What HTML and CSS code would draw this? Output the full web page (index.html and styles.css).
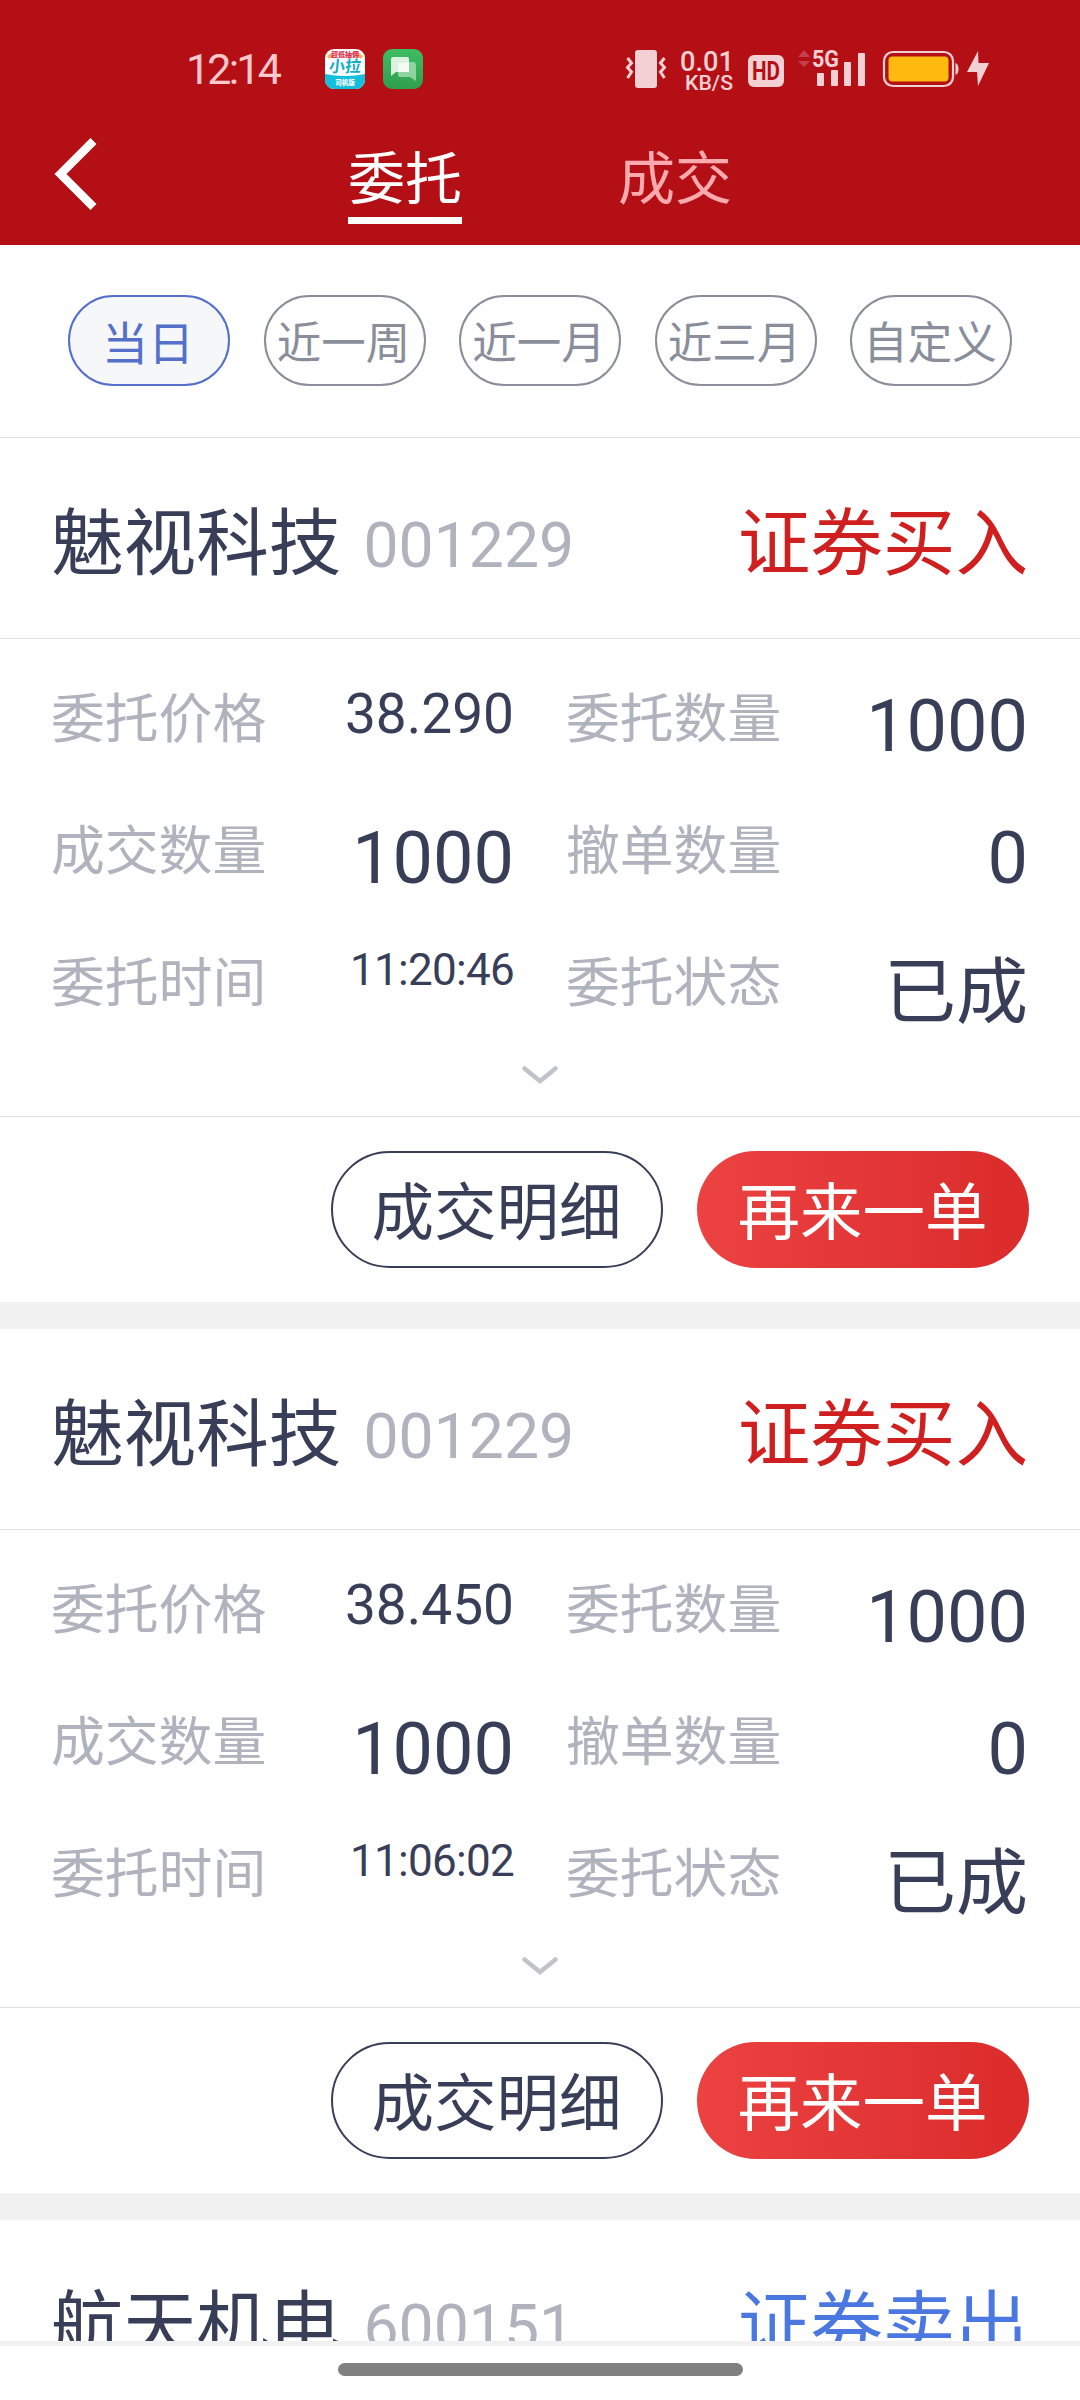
FILE: index.html
```html
<!DOCTYPE html>
<html lang="zh-CN">
<head>
  <meta charset="UTF-8" />
  <meta name="viewport" content="width=device-width, initial-scale=1.0"/>
  <title>当日委托</title>
  <link rel="stylesheet" href="styles.css">
</head>
<body>
  <div class="screen">
    <!-- Header -->
    <header class="header">
      <div class="status-bar">
        <span class="clock">12:14</span>
        <svg class="app-icon" viewBox="0 0 40 40">
          <defs><clipPath id="appClip"><rect width="40" height="40" rx="9"/></clipPath></defs>
          <g clip-path="url(#appClip)">
            <rect width="40" height="40" fill="#fff"/>
            <path d="M0 25q20 4 40 0v15H0z" fill="#12bfdc"/>
            <path d="M2 7l4-3 2 3-4 3zM38 7l-4-3-2 3 4 3z" fill="#f2b75c"/>
            <text x="20" y="8" font-size="7" font-weight="900" fill="#e0304a" text-anchor="middle">超低抽佣</text>
            <text x="20" y="23" font-size="16" font-weight="700" fill="#12adc9" text-anchor="middle" transform="skewX(-6) translate(2 0)">小拉</text>
            <text x="20" y="36" font-size="6.5" font-weight="900" fill="#fff" text-anchor="middle">司机版</text>
          </g>
        </svg>
        <svg class="app-icon chat-icon" viewBox="0 0 40 40">
          <defs>
            <linearGradient id="chatBg" x1="0" y1="0" x2="0" y2="1">
              <stop offset="0" stop-color="#3dbd62"/><stop offset="1" stop-color="#2f9f4e"/>
            </linearGradient>
          </defs>
          <rect width="40" height="40" rx="9" fill="url(#chatBg)"/>
          <path d="M17 13h13a3 3 0 0 1 3 3v16l-6-4H17a2 2 0 0 1-2-2V15a2 2 0 0 1 2-2z" fill="#8fd49f"/>
          <path d="M10 8h14a2 2 0 0 1 2 2v11a2 2 0 0 1-2 2H13l-5 4V10a2 2 0 0 1 2-2z" fill="#dcf2e0"/>
          <rect x="15" y="14" width="11" height="9" fill="#f4fbf5"/>
        </svg>

        <svg class="vibrate" viewBox="0 0 40 38">
          <rect x="9" y="0" width="22" height="38" rx="3" fill="#f3d0d3"/>
          <path d="M1.5 8l4 5-4 4.500 4 4.500-4 6M38.500 8l-4 5 4 4.500-4 4.500 4 6" fill="none" stroke="#f3d0d3" stroke-width="3"/>
        </svg>
        <svg class="net-speed" viewBox="0 0 54 42">
          <g fill="#f3d0d3" font-weight="500">
            <text x="0" y="22" font-size="28.500" textLength="54" lengthAdjust="spacingAndGlyphs">0.01</text>
            <text x="5" y="40.500" font-size="20.500" textLength="48" lengthAdjust="spacingAndGlyphs">KB/S</text>
          </g>
        </svg>
        <svg class="hd" viewBox="0 0 36 32">
          <rect width="36" height="32" rx="6" fill="#f3d0d3"/>
          <text x="4" y="25" font-size="25" font-weight="700" fill="#b50f16" textLength="28" lengthAdjust="spacingAndGlyphs">HD</text>
        </svg>
        <svg class="signal" viewBox="0 0 68 38">
          <path d="M0 8l6-7 6 7zM0 12h12l-6 6z" fill="#c5404a"/>
          <text x="14" y="18" font-size="24" font-weight="700" fill="#f3d0d3" textLength="27" lengthAdjust="spacingAndGlyphs">5G</text>
          <g fill="#f3d0d3">
            <rect x="19" y="24" width="7" height="13" rx="1"/>
            <rect x="33" y="21" width="7" height="16" rx="1"/>
            <rect x="46" y="13" width="7" height="24" rx="1"/>
            <rect x="60" y="4" width="7" height="33" rx="1"/>
          </g>
        </svg>
        <svg class="battery" viewBox="0 0 76 36">
          <rect x="1" y="1" width="69" height="34" rx="9" fill="none" stroke="#f3d0d3" stroke-width="2.200"/>
          <rect x="5.500" y="5.500" width="60" height="25" rx="4" fill="#ffb90f"/>
          <path d="M72.500 12q3 1 3 6t-3 6z" fill="#f3d0d3"/>
        </svg>
        <svg class="bolt" viewBox="0 0 22 36">
          <path d="M11 0L0 21h10l1 14L22 12H11.500z" fill="#f3d0d3"/>
        </svg>
      </div>

      <nav class="tabs">
        <svg class="back" viewBox="0 0 42 72">
          <path d="M38.500 3L5.500 36l33 33" fill="none" stroke="#fff" stroke-width="8.500"/>
        </svg>
        <a class="tab active">委托</a>
        <a class="tab">成交</a>
      </nav>
    </header>

    <!-- Date filter -->
    <div class="filters">
      <button class="chip active">当日</button>
      <button class="chip">近一周</button>
      <button class="chip">近一月</button>
      <button class="chip">近三月</button>
      <button class="chip">自定义</button>
    </div>

    <!-- Orders -->
    <main class="orders">
      <section class="order">
        <div class="order-head">
          <span class="name">魅视科技</span>
          <span class="code">001229</span>
          <span class="side buy">证券买入</span>
        </div>
        <div class="order-body">
          <div class="fields">
            <span class="label">委托价格</span><span class="value price">38.290</span>
            <span class="label">委托数量</span><span class="value">1000</span>
            <span class="label">成交数量</span><span class="value">1000</span>
            <span class="label">撤单数量</span><span class="value">0</span>
            <span class="label">委托时间</span><span class="value time">11:20:46</span>
            <span class="label">委托状态</span><span class="value status">已成</span>
          </div>
          <svg class="expand" viewBox="0 0 36 18"><path d="M2.500 2.500L18 15 33.500 2.500" fill="none" stroke="#c1c3ca" stroke-width="4.500" stroke-linecap="round"/></svg>
        </div>
        <div class="order-actions">
          <button class="btn">成交明细</button>
          <button class="btn primary">再来一单</button>
        </div>
      </section>

      <section class="order">
        <div class="order-head">
          <span class="name">魅视科技</span>
          <span class="code">001229</span>
          <span class="side buy">证券买入</span>
        </div>
        <div class="order-body">
          <div class="fields">
            <span class="label">委托价格</span><span class="value price">38.450</span>
            <span class="label">委托数量</span><span class="value">1000</span>
            <span class="label">成交数量</span><span class="value">1000</span>
            <span class="label">撤单数量</span><span class="value">0</span>
            <span class="label">委托时间</span><span class="value time">11:06:02</span>
            <span class="label">委托状态</span><span class="value status">已成</span>
          </div>
          <svg class="expand" viewBox="0 0 36 18"><path d="M2.500 2.500L18 15 33.500 2.500" fill="none" stroke="#c1c3ca" stroke-width="4.500" stroke-linecap="round"/></svg>
        </div>
        <div class="order-actions">
          <button class="btn">成交明细</button>
          <button class="btn primary">再来一单</button>
        </div>
      </section>

      <section class="order">
        <div class="order-head">
          <span class="name">航天机电</span>
          <span class="code">600151</span>
          <span class="side sell">证券卖出</span>
        </div>
      </section>
    </main>

    <footer class="home-area">
      <div class="home-bar"></div>
    </footer>
  </div>
</body>
</html>
```
FILE: styles.css
```css
* {
  box-sizing: border-box;
}

body {
  margin: 0;
  font-family: Roboto, "Noto Sans CJK SC", sans-serif;
  background-color: #fff;
  color: #383e57;
}

button {
  font-family: inherit;
  padding: 0;
  white-space: nowrap;
}

svg {
  display: block;
  flex-shrink: 0;
  overflow: visible;
}

.screen {
  width: 1080px;
  height: 2400px;
  display: flex;
  flex-direction: column;
  overflow: hidden;
}

/* Header */
.header {
  flex: none;
  height: 245px;
  background-color: #b50f16;
}

.status-bar {
  height: 138px;
  padding: 49px 0 0 186px;
  display: flex;
  align-items: flex-start;
}

.clock {
  width: 139px;
  font-size: 43px;
  line-height: 40px;
  letter-spacing: -2.8px;
  color: #ffc9cd;
}

.app-icon {
  width: 40px;
  height: 40px;
}

.chat-icon {
  margin-left: 18px;
}

.vibrate {
  width: 40px;
  height: 38px;
  margin: 1px 0 0 203px;
}

.net-speed {
  width: 54px;
  height: 42px;
  margin-left: 14px;
}

.hd {
  width: 36px;
  height: 32px;
  margin: 6px 0 0 14px;
}

.signal {
  width: 68px;
  height: 38px;
  margin-left: 14px;
}

.battery {
  width: 76px;
  height: 36px;
  margin: 2px 0 0 17px;
}

.bolt {
  width: 22px;
  height: 36px;
  margin: 2px 0 0 8px;
}

.tabs {
  display: flex;
  align-items: flex-start;
  padding-left: 55px;
}

.back {
  width: 42px;
  height: 72px;
}

.tab {
  width: 114px;
  height: 86px;
  margin-left: 156px;
  font-size: 57px;
  line-height: 83px;
  text-align: center;
  white-space: nowrap;
  color: #ffaaae;
}

.tab.active {
  margin-left: 251px;
  color: #fff;
  border-bottom: 7px solid #fff;
}

/* Date filter */
.filters {
  flex: none;
  height: 193px;
  padding: 50px 68px 0;
  display: flex;
  justify-content: space-between;
  border-bottom: 1px solid #dfe0e2;
}

.chip {
  width: 162px;
  height: 91px;
  padding: 7px 2px 0 0;
  border: 2px solid #8a8e9b;
  border-radius: 46px;
  background-color: #fff;
  font-size: 44.5px;
  line-height: 80px;
  color: #8a8e9b;
}

.chip.active {
  background-color: #f6f7f9;
  border-color: #5470cb;
  font-size: 46px;
  color: #5470cb;
}

/* Orders */
.orders {
  flex: 1;
  min-height: 0;
  overflow: hidden;
}

.order {
  height: 891px;
  border-bottom: 27px solid #f1f1f2;
}

.order-head {
  height: 201px;
  padding: 50px 52px 0 51px;
  display: flex;
  align-items: flex-start;
  border-bottom: 1px solid #dfe0e2;
}

.name,
.side {
  font-size: 72.6px;
  line-height: 114px;
}

.code {
  margin-left: 22px;
  font-size: 62.5px;
  line-height: 116px;
  color: #b0b2bd;
}

.side {
  margin-left: auto;
}

.buy {
  color: #d01f1f;
}

.sell {
  color: #4b78e0;
}

.order-body {
  height: 478px;
  padding: 34px 52px 0 51px;
  border-bottom: 1px solid #dfe0e2;
}

.fields {
  display: grid;
  grid-template-columns: 221px 242px 52px 221px 241px;
  grid-auto-rows: 132px;
}

.fields .label:nth-child(4n + 3) {
  grid-column: 4;
}

.label {
  font-size: 53.8px;
  line-height: 93px;
  color: #b0b2bd;
}

.value {
  font-size: 72px;
  line-height: 1.5;
  text-align: right;
}

.price {
  font-size: 55px;
}

.time {
  font-size: 44px;
  letter-spacing: -0.7px;
}

.status {
  line-height: 112px;
}

.expand {
  width: 36px;
  height: 18px;
  margin: -3px auto 0;
}

.order-actions {
  height: 185px;
  padding: 34px 51px 0;
  display: flex;
  justify-content: flex-end;
  gap: 34px;
}

.btn {
  width: 332px;
  height: 117px;
  padding: 8px 1px 0 0;
  border: 2px solid #383e57;
  border-radius: 59px;
  background-color: #fff;
  font-size: 62.5px;
  line-height: 105px;
  color: #383e57;
}

/* Buttons centre their text, so the padding carries the offset */
.chip,
.btn {
  display: block;
}

.btn.primary {
  border: 2px solid transparent;
  background: linear-gradient(to right, #ec4242, #db2b2b) border-box;
  color: #fff;
}

/* Home indicator */
.home-area {
  flex: none;
  height: 59px;
  padding-top: 17px;
  border-top: 5px solid #f1f1f2;
  background-color: #fff;
}

.home-bar {
  width: 405px;
  height: 13px;
  margin: 0 auto;
  border-radius: 7px;
  background-color: #808080;
}
```
